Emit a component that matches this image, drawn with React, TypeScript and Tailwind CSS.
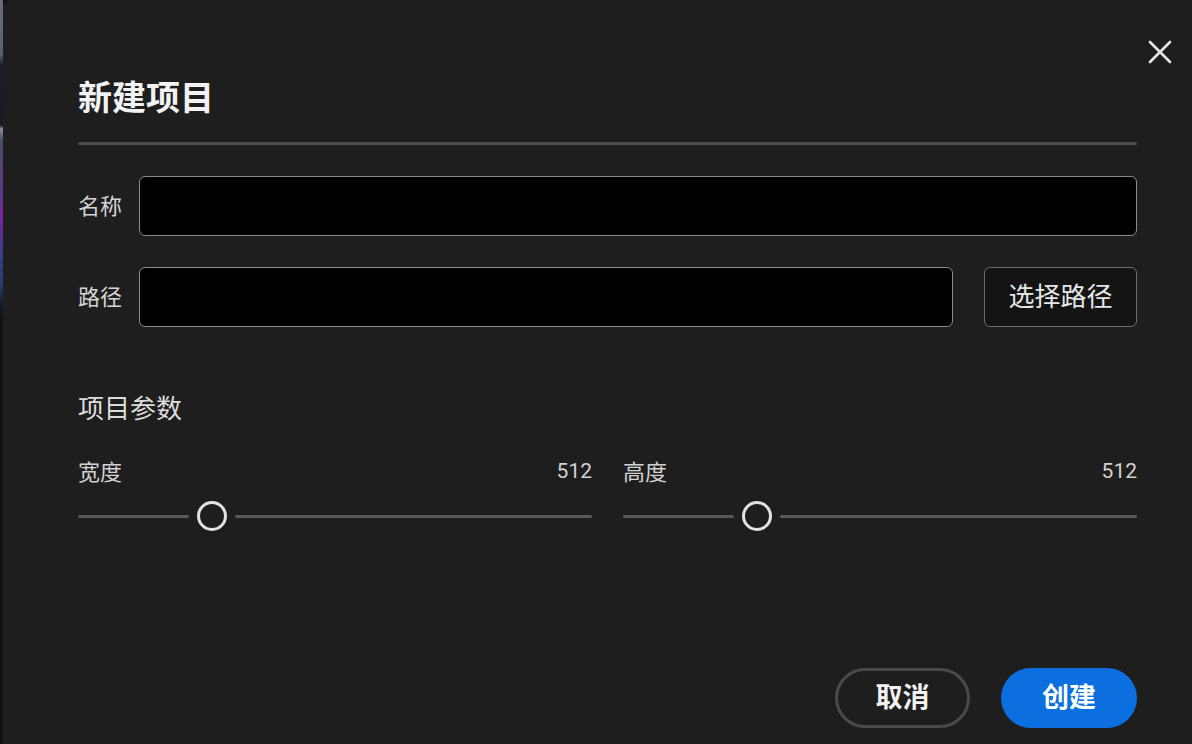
import React from "react";

const FONT = { fontFamily: 'Roboto, "Noto Sans CJK SC", "Noto Sans", sans-serif' };

function Slider({ label, value, min, max }: { label: string; value: number; min: number; max: number }) {
  const frac = (value - min) / (max - min);
  return (
    <div className="flex flex-col">
      <div className="flex items-center justify-between h-[28px] text-[22px] text-[#d2d2d2]">
        <span>{label}</span>
        <span className="text-[21px]">{value}</span>
      </div>
      <div className="flex items-center h-[32px] mt-[14px]">
        <div className="h-[3px] bg-[#585858] rounded-full" style={{ flex: `${frac} 1 0px` }} />
        <div className="mx-[8px] w-[30px] h-[30px] rounded-full border-[3px] border-[#e2e2e2] bg-[#1e1e1e] shrink-0" />
        <div className="h-[3px] bg-[#585858] rounded-full" style={{ flex: `${1 - frac} 1 0px` }} />
      </div>
    </div>
  );
}

export default function App() {
  return (
    <div className="w-[1192px] h-[744px] flex bg-[#111]" style={FONT}>
      <div className="w-[3px] h-full bg-[linear-gradient(to_bottom,#6b6b7e_0px,#5a5e72_55px,#1c1d2a_65px,#1a1a20_125px,#8a8a96_129px,#4a4e68_140px,#5a3a86_190px,#7a249a_215px,#3a3f8a_255px,#283a6a_285px,#141a2a_305px,#111_320px,#111_100%)]" />
      <div className="relative flex-1 h-full bg-[#1e1e1e] rounded-tl-[8px] pl-[75px] pr-[55px] pt-[77px]">
        <button className="absolute right-[20px] top-[40px] w-[24px] h-[24px] flex items-center justify-center">
          <svg width="24" height="24" viewBox="0 0 24 24" fill="none">
            <path d="M2 2 L22 22 M22 2 L2 22" stroke="#e6e6e6" strokeWidth="2.6" strokeLinecap="round" />
          </svg>
        </button>
        <h1 className="text-[34px] leading-[42px] font-bold text-[#f2f2f2]">新建项目</h1>
        <div className="mt-[23px] h-[3px] bg-[#4c4c4c] rounded-full" />

        <div className="mt-[31px] flex items-center gap-[15px]">
          <span className="w-[46px] text-[22px] text-[#d4d4d4] whitespace-nowrap">名称</span>
          <div className="flex-1 h-[60px] rounded-[6px] border-[1.5px] border-[#8c8c8c] bg-black" />
        </div>
        <div className="mt-[31px] flex items-center gap-[15px]">
          <span className="w-[46px] text-[22px] text-[#d4d4d4] whitespace-nowrap">路径</span>
          <div className="flex-1 h-[60px] rounded-[6px] border-[1.5px] border-[#8c8c8c] bg-black" />
          <button className="ml-[16px] w-[153px] h-[60px] rounded-[6px] border-[1.5px] border-[#6c6c6c] bg-[#141414] text-[26px] text-[#e6e6e6]">
            选择路径
          </button>
        </div>

        <div className="mt-[66px] text-[26px] leading-[32px] text-[#dcdcdc]">项目参数</div>

        <div className="mt-[33px] grid grid-cols-2 gap-[31px]">
          <Slider label="宽度" value={512} min={32} max={2048} />
          <Slider label="高度" value={512} min={32} max={2048} />
        </div>

        <div className="absolute right-[55px] bottom-[16px] flex gap-[31px]">
          <button className="w-[135px] h-[60px] rounded-full border-[3px] border-[#4a4a4a] text-[27px] font-bold text-[#f2f2f2]">
            取消
          </button>
          <button className="w-[136px] h-[60px] rounded-full bg-[#0b6fe0] text-[27px] font-bold text-white">
            创建
          </button>
        </div>
      </div>
    </div>
  );
}
